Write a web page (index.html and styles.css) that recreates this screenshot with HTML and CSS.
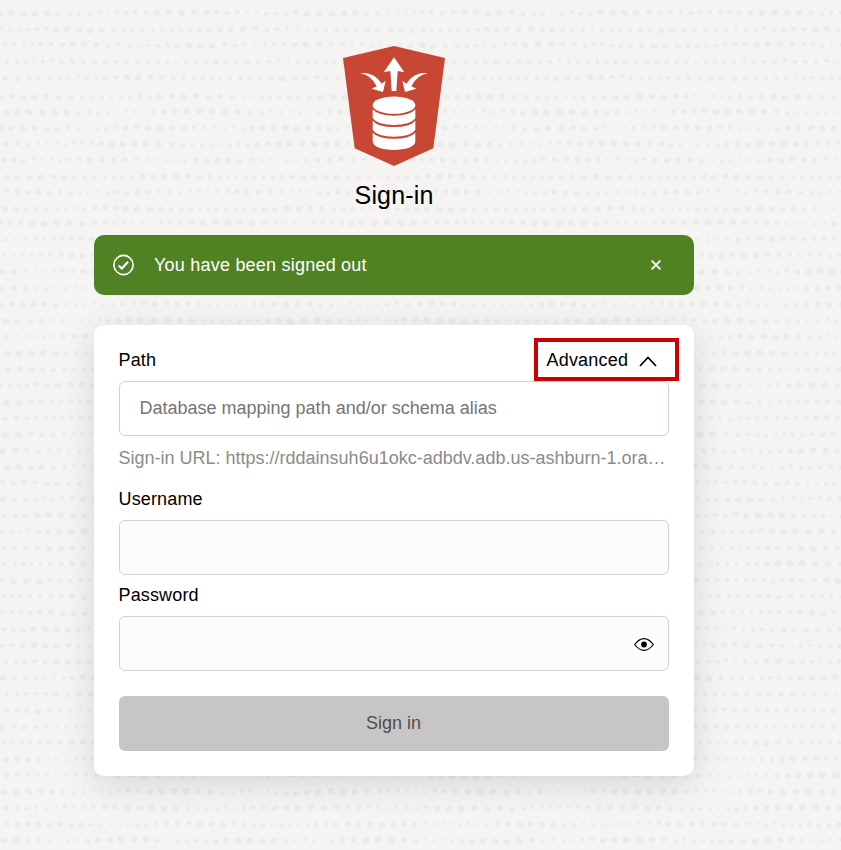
FILE: index.html
```html
<!DOCTYPE html>
<html lang="en">
<head>
<meta charset="utf-8">
<title>Sign-in</title>
<link rel="stylesheet" href="styles.css">
</head>
<body>
<svg class="texture" id="texture" aria-hidden="true"></svg>
<main class="page">
  <header class="brand">
    <svg class="logo" viewBox="27 30 306 360" aria-hidden="true">
      <path fill="#c74634" d="M27 66 180 30 333 66 298 337 180 390 62 337Z"/>
      <g fill="#fff">
        <path d="M180 64 211 109Q200 106 191 105L187 165H173L169 105Q160 106 149 109Z"/>
        <path d="M79 112Q119 106 143 143L155 134 147 168 113 158 128 151Q111 117 79 112Z"/>
        <path d="M281 112Q241 106 217 143L205 134 213 168 247 158 232 151Q249 117 281 112Z"/>
        <ellipse cx="180" cy="207.500" rx="64" ry="26"/>
        <path d="M116 220Q132 239 180 239T244 220V247Q230 267 180 267T116 247Z"/>
        <path d="M116 254Q132 273 180 273T244 254V282Q230 302 180 302T116 282Z"/>
        <path d="M116 290Q132 308 180 308T244 290V316C244 333 214 342 180 342S116 333 116 316Z"/>
      </g>
    </svg>
    <h1 class="title">Sign-in</h1>
  </header>
  <div class="notice" role="status">
    <svg class="notice-icon" viewBox="0 0 22 22" aria-hidden="true"><circle cx="10.500" cy="11" r="9.600"/><path d="M5.600 11.400 8.900 14.500 15.100 7.700" class="tick"/></svg>
    <span class="notice-text">You have been signed out</span>
    <svg class="close" viewBox="0 0 12 12" aria-hidden="true"><path d="M1.600 1.600 10.400 10.400M10.400 1.600 1.600 10.400"/></svg>
  </div>
  <form class="card">
    <div class="row">
      <label class="label" for="path">Path</label>
      <button class="advanced" type="button"><span>Advanced</span><svg class="chevron" viewBox="0 0 18 11" aria-hidden="true"><path d="M1 10 9 1.500 17 10"/></svg></button>
    </div>
    <input class="field path" id="path" placeholder="Database mapping path and/or schema alias">
    <p class="url">Sign-in URL: https://rddainsuh6u1okc-adbdv.adb.us-ashburn-1.ora…</p>
    <label class="label" for="user">Username</label>
    <input class="field" id="user">
    <label class="label" for="pass">Password</label>
    <div class="field secret">
      <input class="bare" id="pass" type="password">
      <svg class="eye" viewBox="0 0 20 13" aria-hidden="true"><path d="M.7 6.500Q5 .7 10 .7T19.300 6.500Q15 12.300 10 12.300T.7 6.500Z"/><circle cx="10" cy="6.500" r="2.900"/></svg>
    </div>
    <button class="submit" type="button" disabled>Sign in</button>
  </form>
</main>
<script src="texture.js"></script>
</body>
</html>
```
FILE: styles.css
```css
* { box-sizing: border-box; }
body { margin: 0; height: 850px; overflow: hidden; background: #f5f4f2; color: #000; font: 18px/24px "Liberation Sans", Arial, sans-serif; }
.texture { position: absolute; left: 0; top: 0; width: 841px; height: 850px; fill: #ecebe9; }
.page { position: relative; width: 600px; margin-left: 94px; padding-top: 46px; }
.brand { display: flex; flex-direction: column; align-items: center; height: 189px; }
.logo { width: 102px; height: 120px; }
.title { margin: 13px 0 0; font-size: 25px; line-height: 32px; font-weight: 400; letter-spacing: .15px; }
.notice { display: flex; align-items: center; height: 60px; padding: 0 32px 0 19px; border-radius: 10px; background: #508223; color: #fff; }
.notice-icon { width: 22px; height: 22px; fill: none; stroke: #fff; stroke-width: 1.6; }
.tick { stroke-width: 2.1; }
.notice-text { flex: 1; margin-left: 19px; letter-spacing: .22px; }
.close { width: 12px; height: 12px; fill: none; stroke: #fff; stroke-width: 1.8; }
.card { display: flex; flex-direction: column; height: 451px; margin-top: 30px; padding: 13px 25px 25px; border-radius: 10px; background: #fff; box-shadow: 0 8px 32px rgba(0, 0, 0, .12); }
.row { display: flex; justify-content: space-between; align-items: center; height: 43px; margin-right: -10px; }
.label { margin-left: -.5px; line-height: 24px; letter-spacing: .15px; }
.advanced { display: flex; align-items: center; gap: 11px; position: relative; width: 145px; height: 43px; padding: 0 0 0 8.5px; border: 4px solid #c00; background: none; color: #000; font: inherit; letter-spacing: .2px; }
.chevron { width: 18px; height: 11px; margin-top: 3px; fill: none; stroke: #000; stroke-width: 1.7; }
.field { width: 550px; height: 55px; flex: none; margin: 9px 0 8px; padding: 0 20px; border: 1px solid #c9d3df; border-radius: 6px; background: #fcfcfc; font: inherit; }
.path { margin: 0; padding-left: 19.5px; background: #fff; }
.path::placeholder { color: #757575; opacity: 1; }
.url { margin: 10px 0 17px -.5px; color: #8b8b8b; white-space: nowrap; line-height: 24px; }
.secret { display: flex; align-items: center; padding: 0 14.5px 0 20px; }
.bare { flex: 1; border: 0; background: none; font: inherit; }
.eye { width: 20px; height: 13px; margin-top: 1px; fill: none; stroke: #000; stroke-width: 1.2; }
.eye circle { fill: #000; stroke: none; }
.submit { height: 55px; margin-top: 17px; padding: 0 1px 1px 0; border: 0; border-radius: 6px; background: #c6c6c6; color: #524d4b; font: inherit; }
```
FILE: texture.js
```js
// Rows of hand-drawn looking dots whose sizes swell and shrink along each row.
const svg = document.getElementById("texture");
const starts = [13, 30, 45, 62, 78, 97, 112, 128, 144, 160, 177, 192, 209, 223];
let seed = 7919;
const rand = () => (seed = (seed * 16807) % 2147483647) / 2147483647;
let dots = "";
for (let row = 0; row < 53; row++) {
  const y = row < starts.length ? starts[row] : 223 + (row - 13) * 16.25;
  const phase = rand() * 6.28;
  const period = 16 + rand() * 12;
  const bulk = 0.45 + rand() * 0.55;
  let x = rand() * 8;
  while (x < 845) {
    const swell = bulk * (0.5 + 0.5 * Math.sin(x / period + phase));
    const rx = 1.5 + swell * 2.2 + rand() * 0.5;
    const ry = 1.5 + swell * 1.5 + rand() * 0.4;
    const cy = y + Math.sin(x / 40 + phase) * 0.5 + rand() * 1.6 - 0.8;
    const tilt = Math.round(rand() * 50 - 25);
    dots += `<ellipse cx="${x.toFixed(1)}" cy="${cy.toFixed(1)}" rx="${rx.toFixed(1)}" ry="${ry.toFixed(1)}" transform="rotate(${tilt} ${x.toFixed(1)} ${cy.toFixed(1)})"/>`;
    x += 8 + swell * 4 + rand() * 2;
  }
}
svg.innerHTML = dots;
```
